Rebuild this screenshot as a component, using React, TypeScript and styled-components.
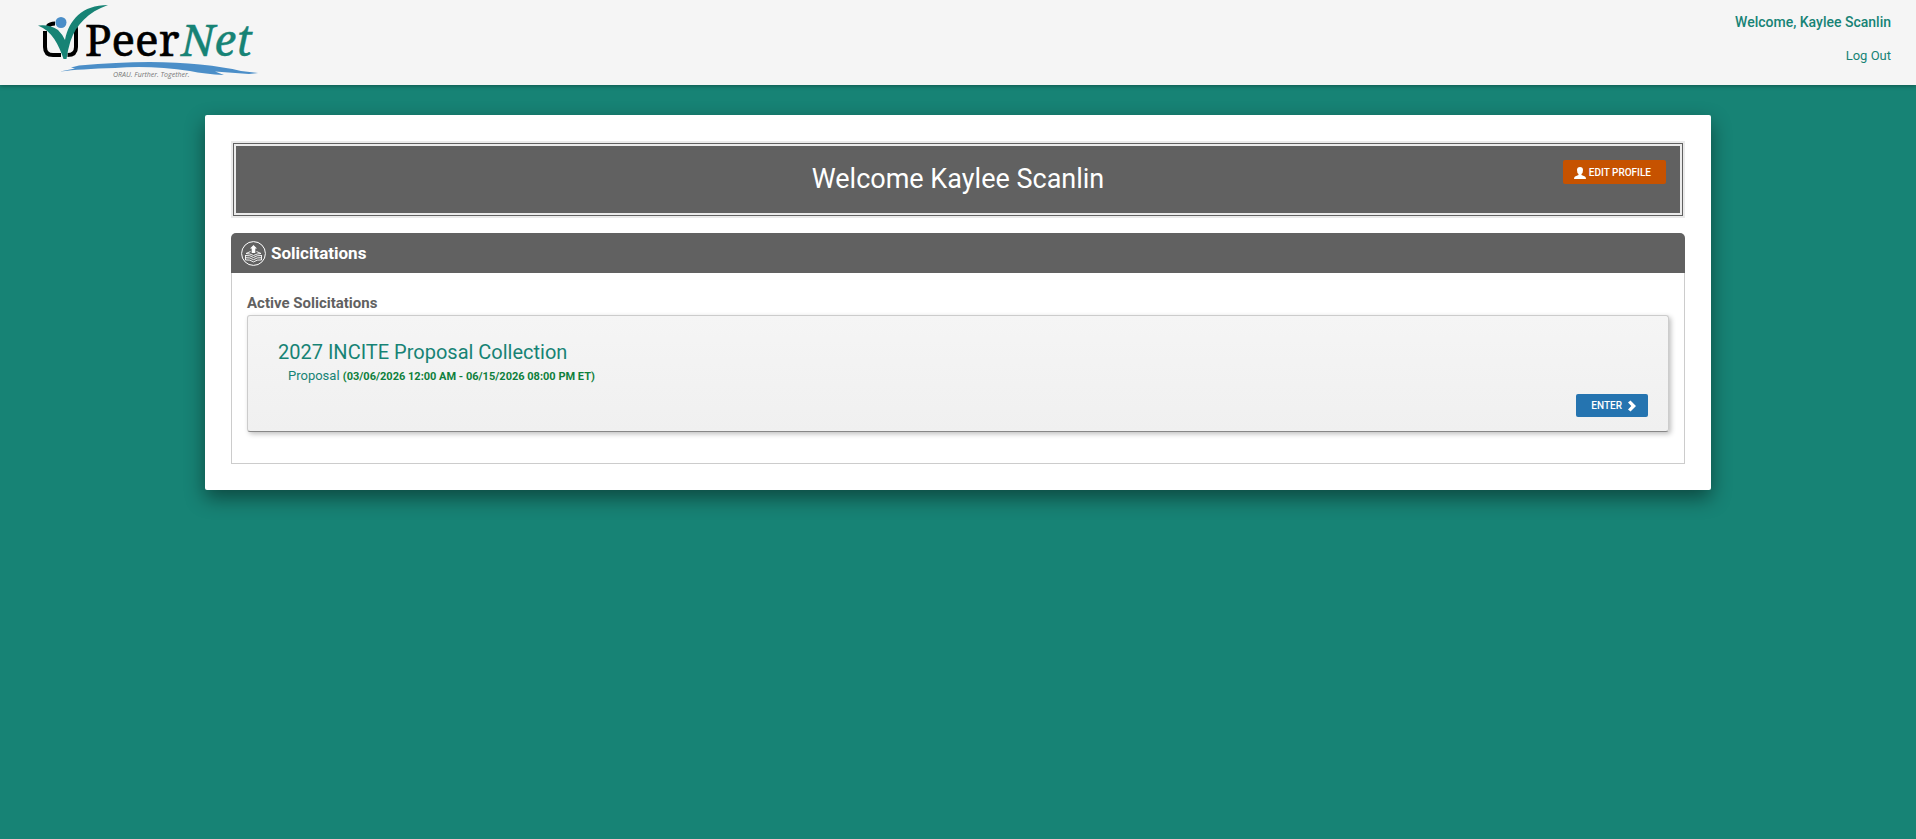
import React from "react";
import styled, { createGlobalStyle } from "styled-components";

const GlobalStyle = createGlobalStyle`
  *, *::before, *::after { box-sizing: border-box; }
  body {
    margin: 0;
    background: #178375;
    font-family: Roboto, "Liberation Sans", sans-serif;
    font-size: 14px;
    line-height: 20px;
  }
  h1, h2, h3, h4, p { margin: 0; }
`;

const TopBar = styled.header`
  display: flex;
  justify-content: space-between;
  align-items: flex-start;
  height: 85px;
  padding: 0 25px 0 38px;
  background: #f5f5f5;
  box-shadow: 0 1px 4px rgba(0, 0, 0, 0.35);
`;

const LogoLink = styled.a`
  display: block;
  height: 84px;
`;

const Account = styled.nav`
  display: flex;
  flex-direction: column;
  align-items: flex-end;
  gap: 14px;
  padding-top: 12px;
`;

const AccountLink = styled.a<{ $strong?: boolean }>`
  color: #178375;
  font-size: ${(p) => (p.$strong ? 14 : 13)}px;
  font-weight: ${(p) => (p.$strong ? 500 : 400)};
  text-decoration: none;
`;

const Sheet = styled.main`
  margin: 30px 205px;
  padding: 26px;
  background: #fff;
  border-radius: 2px;
  box-shadow: 0 8px 20px rgba(0, 0, 0, 0.45);
`;

const Banner = styled.section`
  display: grid;
  grid-template-columns: 1fr auto 1fr;
  align-items: start;
  height: 77px;
  padding: 14px;
  margin-bottom: 15px;
  border: 5px double #ebebeb;
  background: #616161;
`;

const BannerTitle = styled.h1`
  grid-column: 2;
  padding-top: 5px;
  color: #fff;
  font-size: 27px;
  font-weight: 400;
  line-height: 28px;
`;

const Button = styled.button<{ $tone: "orange" | "blue" }>`
  display: inline-flex;
  align-items: center;
  gap: ${(p) => (p.$tone === "blue" ? 6 : 3)}px;
  height: ${(p) => (p.$tone === "blue" ? 23 : 24)}px;
  padding: ${(p) => (p.$tone === "blue" ? "0 12px 0 15px" : "1px 15px 0 11px")};
  border: 0;
  border-radius: 2px;
  background: ${(p) => (p.$tone === "blue" ? "#2574b0" : "#c65200")};
  color: #fff;
  font: 500 10px/16px Roboto, "Liberation Sans", sans-serif;
  text-transform: uppercase;
  cursor: pointer;
  justify-self: end;
`;

const PanelHead = styled.header`
  display: flex;
  align-items: center;
  gap: 5px;
  height: 40px;
  padding: 0 10px;
  border-radius: 5px 5px 0 0;
  background: #616161;
`;

const PanelTitle = styled.h2`
  color: #fff;
  font-size: 17px;
  font-weight: 700;
`;

const PanelBody = styled.div`
  padding: 20px 15px 31px;
  border: 1px solid #ccc;
  border-top: 0;
`;

const GroupTitle = styled.h3`
  margin-bottom: 2px;
  color: #616161;
  font-size: 15px;
  font-weight: 700;
`;

const Item = styled.article`
  display: flex;
  flex-direction: column;
  padding: 24px 20px 14px 30px;
  border: 1px solid #ccc;
  border-bottom-color: #888;
  border-radius: 3px;
  background: linear-gradient(#f5f5f5, #f0f0f0);
  box-shadow: 2px 2px 5px rgba(0, 0, 0, 0.25);
`;

const ItemTitle = styled.h4`
  color: #178375;
  font-size: 20px;
  font-weight: 400;
  line-height: 24px;
`;

const ItemPhase = styled.p`
  padding: 2px 0 7px 10px;
  color: #178375;
  font-size: 13px;
`;

const Dates = styled.strong`
  color: #0e7f3c;
  font-size: 11px;
  font-weight: 700;
`;

const ItemActions = styled.div`
  display: flex;
  justify-content: flex-end;
`;

const Logo = () => (
  <svg width="222" height="84" viewBox="38 0 222 84" role="img" aria-label="PeerNet">
    <path d="M55 23.500 Q50 23.500 47.500 26.500 M45 31 V47 Q45 55 53 55 H61 M67.500 55 Q76 55 76 47 V30 Q76 26 73.500 23.500" fill="none" stroke="#000" strokeWidth="4" />
    <path d="M38 25.500 Q50 24 58 30 Q63 35 65 40 C69 20 82 5 108 5 C88 12 76 25 70.500 41 Q68 49 66.500 59 H63.500 C59 45 52 31 38 25.500Z" fill="#178375" />
    <circle cx="61" cy="22.500" r="5.500" fill="#4b8ec8" />
    <text x="85" y="56" fontFamily="Noto Serif, DejaVu Serif, serif" fontSize="44" stroke="#000" strokeWidth="0.6">Peer</text>
    <text x="181" y="56" fontFamily="Noto Serif, DejaVu Serif, serif" fontSize="44" fontStyle="italic" fill="#178375" stroke="#178375" strokeWidth="0.4">Net</text>
    <path d="M60 71.500 L75 68.500 L71 67.500 L79 65.500 Q150 59 200 64.500 Q225 67 241 71 L258 73 L249 74 L215 71.500 L224 75 Q205 74 190 71 Q150 65 115 68 Q80 69 60 71.500Z" fill="#4b8ec8" />
    <text x="113" y="77" fontFamily="Open Sans, sans-serif" fontSize="7" fontStyle="italic" fill="#777">ORAU. Further. Together.</text>
  </svg>
);

const SolicitIcon = () => (
  <svg width="25" height="25" viewBox="0 0 25 25" fill="none" stroke="#fff" aria-hidden="true">
    <circle cx="12.500" cy="12.500" r="11.900" />
    <path d="M12.500 4 L16 7.500 H14.300 V12 H10.700 V7.500 H9Z" fill="#fff" stroke="none" />
    <path d="M9.500 10.500 L5 12.500 Q9 12.500 12.500 14.500 Q16 12.500 20 12.500 L15.500 10.500" strokeWidth="0.9" />
    <path d="M4.500 14 V19 M20.500 14 V19 M4.500 14.500 Q9 14 12.500 16.500 Q16 14 20.500 14.500 M4.500 16.700 Q9 16.200 12.500 18.700 Q16 16.200 20.500 16.700 M4.500 18.900 Q9 18.400 12.500 20.900 Q16 18.400 20.500 18.900" strokeWidth="0.9" />
  </svg>
);

const UserIcon = () => (
  <svg width="12" height="12" viewBox="0 0 12 12" fill="#fff" aria-hidden="true">
    <path d="M6 0 Q9 0 9 3 Q9 6 7.500 7 V8 L11 9.500 Q12 10 12 12 H0 Q0 10 1 9.500 L4.500 8 V7 Q3 6 3 3 Q3 0 6 0Z" />
  </svg>
);

const ChevronIcon = () => (
  <svg width="8" height="12" viewBox="0 0 8 12" fill="#fff" aria-hidden="true">
    <path d="M2.500 0.500 L8 6 L2.500 11.500 L0 9.500 L3.300 6 L0 2.500Z" />
  </svg>
);

export default function App() {
  return (
    <>
      <GlobalStyle />
      <TopBar>
        <LogoLink href="#"><Logo /></LogoLink>
        <Account aria-label="Account">
          <AccountLink href="#profile" $strong>Welcome, Kaylee Scanlin</AccountLink>
          <AccountLink href="#logout">Log Out</AccountLink>
        </Account>
      </TopBar>
      <Sheet>
        <Banner>
          <BannerTitle>Welcome Kaylee Scanlin</BannerTitle>
          <Button type="button" $tone="orange"><UserIcon />Edit Profile</Button>
        </Banner>
        <section>
          <PanelHead>
            <SolicitIcon />
            <PanelTitle>Solicitations</PanelTitle>
          </PanelHead>
          <PanelBody>
            <GroupTitle>Active Solicitations</GroupTitle>
            <Item>
              <ItemTitle>2027 INCITE Proposal Collection</ItemTitle>
              <ItemPhase>Proposal <Dates>(03/06/2026 12:00 AM - 06/15/2026 08:00 PM ET)</Dates></ItemPhase>
              <ItemActions>
                <Button type="button" $tone="blue">Enter<ChevronIcon /></Button>
              </ItemActions>
            </Item>
          </PanelBody>
        </section>
      </Sheet>
    </>
  );
}
